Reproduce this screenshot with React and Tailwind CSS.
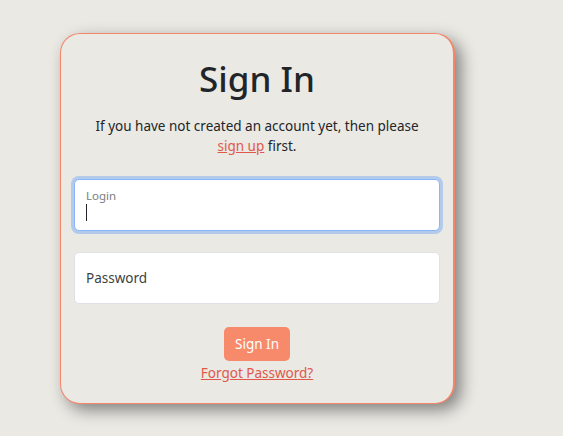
export default function App() {
  return (
    <div
      className="min-h-screen w-full bg-[#ebe9e4] pt-[33px] pl-[60px]"
      style={{ fontFamily: '"Noto Sans", "Open Sans", sans-serif' }}
    >
      <div className="w-[395px] h-[371px] rounded-[20px] border border-[#f4876b] border-r-2 bg-[#ebe9e4] px-[13px] pt-[21px] shadow-[6px_6px_16px_rgba(0,0,0,0.45)]">
        <h1 className="text-center text-[35px] font-medium leading-[48px] text-[#212529]">Sign In</h1>

        <p className="mt-[13px] text-center text-[13.5px] leading-[20px] text-[#212529]">
          If you have not created an account yet, then please
          <br />
          <a href="#" className="text-[#e0584b] underline">
            sign up
          </a>{' '}
          first.
        </p>

        <div className="mt-[23px] flex flex-col gap-[21px]">
          <div className="relative h-[52px] rounded-[5px] border border-[#86b7fe] bg-white shadow-[0_0_0_3px_rgba(13,110,253,0.25)]">
            <span className="absolute left-[11px] top-[7px] text-[11.5px] text-[#7a7d80]">Login</span>
            <span className="absolute left-[11px] top-[24px] h-[17px] w-px bg-[#212529]" />
          </div>
          <div className="flex h-[52px] items-center rounded-[5px] border border-[#dee2e6] bg-white pl-[11px] text-[13.5px] text-[#3c3f42]">
            Password
          </div>
        </div>

        <div className="mt-[23px] flex flex-col items-center">
          <button className="h-[34px] rounded-[5px] bg-[#f88a6c] px-[11px] text-[13.5px] text-white">Sign In</button>
          <a href="#" className="mt-[2px] text-[13.5px] leading-[20px] text-[#e0584b] underline">
            Forgot Password?
          </a>
        </div>
      </div>
    </div>
  );
}
